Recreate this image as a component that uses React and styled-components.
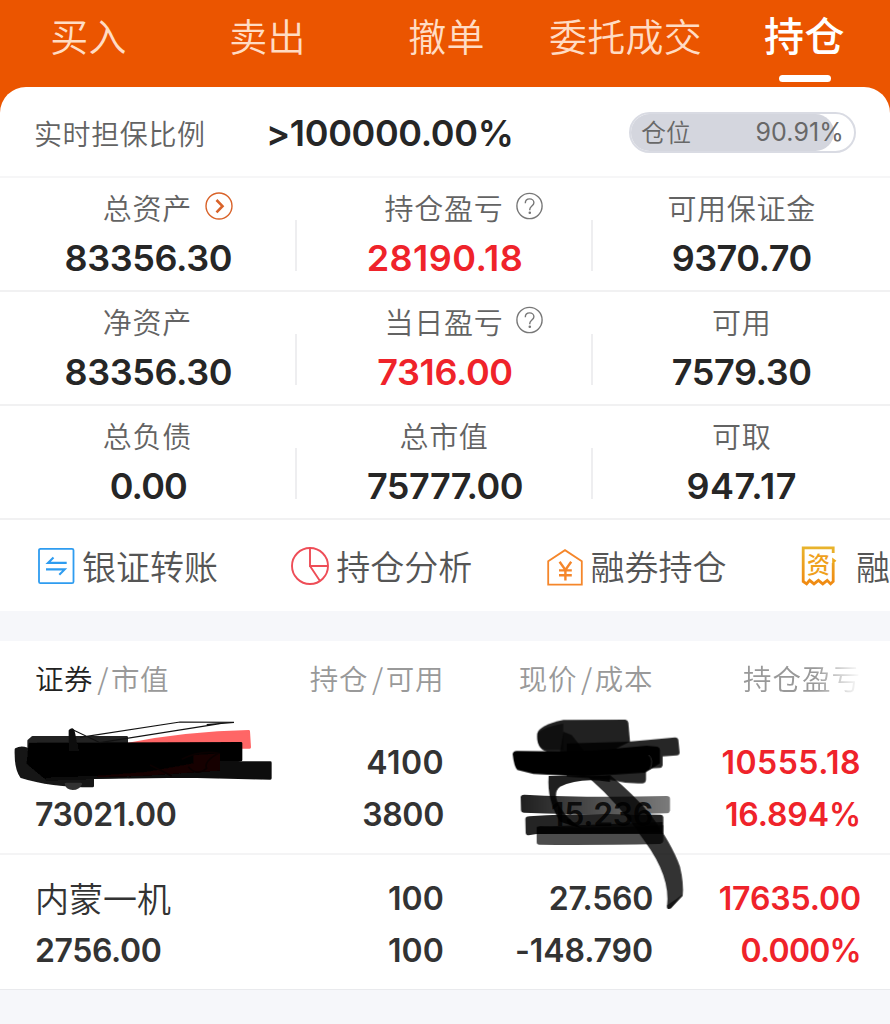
import React from "react";
import styled, { createGlobalStyle } from "styled-components";

const cjk = `"Noto Sans CJK SC", "Noto Sans", sans-serif`;
const num = `Inter, "Noto Sans CJK SC", sans-serif`;

const GlobalStyle = createGlobalStyle`
  * {
    box-sizing: border-box;
  }
  body {
    margin: 0;
    background: #f6f7fa;
    font-family: ${cjk};
    font-feature-settings: "calt" 0;
    overflow: hidden;
  }
`;

const Page = styled.div`
  position: relative;
  width: 890px;
  height: 1024px;
  overflow: hidden;
  background: #f6f7fa;
`;

const TopBar = styled.div`
  height: 120px;
  margin-bottom: -33px;
  background: #eb5500;
`;

const Tabs = styled.nav`
  display: flex;
  margin-left: -1px;
`;

const Tab = styled.div`
  flex: 0 0 179px;
  height: 87px;
  display: flex;
  flex-direction: column;
  align-items: center;
  font-size: ${p => (p.$active ? 40 : 38)}px;
  font-weight: ${p => (p.$active ? 500 : 350)};
  line-height: 69px;
  letter-spacing: ${p => (p.$active ? 0.5 : 0.3)}px;
  white-space: nowrap;
  color: ${p => (p.$active ? "#fff" : "#ffdcc4")};
`;

const Underline = styled.div`
  width: 52px;
  height: 7px;
  margin-top: 6px;
  border-radius: 4px;
  background: #fff;
`;

const Card = styled.section`
  background: #fff;
  border-radius: 26px 26px 0 0;
  overflow: hidden;
`;

const RatioRow = styled.div`
  display: flex;
  align-items: center;
  height: 91px;
  padding: 2px 34px 0 35px;
  border-bottom: 2px solid #f6f6f7;
`;

const RatioLabel = styled.div`
  width: 232px;
  font-size: 28px;
  font-weight: 350;
  letter-spacing: 0.6px;
  margin-left: -1px;
  color: #636363;
`;

const RatioValue = styled.div`
  flex: 1;
  font-family: ${num};
  font-size: 36px;
  font-weight: 600;
  letter-spacing: -0.35px;
  color: #262626;
`;

const Pill = styled.div`
  position: relative;
  width: 227px;
  height: 41px;
  border: 2px solid #d9dbe3;
  border-radius: 21px;
  overflow: hidden;
`;

const PillFill = styled.div`
  height: 100%;
  border-radius: 0 20px 20px 0;
  background: #d4d6de;
`;

const PillText = styled.div`
  position: absolute;
  inset: 0;
  display: flex;
  align-items: center;
  justify-content: space-between;
  padding: 0 10px;
  font-size: 25px;
  font-weight: 350;
  line-height: 37px;
  color: #686868;

  span:first-child {
    margin-top: -3px;
  }
  span:last-child {
    font-family: ${num};
    font-weight: 400;
    letter-spacing: 0.1px;
  }
`;

const StatRow = styled.div`
  display: grid;
  grid-template-columns: repeat(3, 1fr);
  height: 114px;
  border-bottom: 2px solid #f1f1f2;
`;

const Stat = styled.div`
  display: flex;
  flex-direction: column;
  align-items: center;
  padding-top: 9px;
  background: ${p =>
    p.$last
      ? "none"
      : "linear-gradient(#eeeef0, #eeeef0) right 42px / 2px 51px no-repeat"};
`;

const StatLabel = styled.div`
  display: flex;
  align-items: center;
  height: 40px;
  margin: 0 ${p => (p.$last ? 0 : 2)}px 11px 0;
  font-size: 29px;
  font-weight: 350;
  letter-spacing: 0.7px;
  color: #636363;

  svg {
    width: 28px;
    height: 28px;
    margin: -2px -41px 0 13px;
  }
`;

const StatValue = styled.div`
  height: 40px;
  line-height: 40px;
  font-family: ${num};
  font-size: 36px;
  font-weight: 600;
  letter-spacing: ${p => p.$track || -0.4}px;
  color: ${p => (p.$up ? "#ef232a" : "#262626")};
`;

const Tools = styled.div`
  display: flex;
  height: 91px;
  padding-left: 37px;
  background: #fff;
  overflow: hidden;
`;

const Tool = styled.div`
  flex: 0 0 254.3px;
  display: flex;
  align-items: center;
  gap: ${p => p.$gap || 7}px;
  font-size: 34px;
  font-weight: 350;
  white-space: nowrap;
  color: #555;

  svg {
    flex: none;
    width: 38px;
    height: 40px;
  }
`;

const ToolText = styled.span`
  margin-top: -1px;
`;

const Holdings = styled.section`
  margin-top: 30px;
  background: #fff;
  border-bottom: 1px solid #e9eaed;
`;

const HoldingGrid = styled.div`
  display: grid;
  grid-template-columns: 1fr 209px 209px 208px;
  padding: 0 29px 0 35px;
  text-align: right;

  > :first-child {
    text-align: left;
  }
`;

const HeadRow = styled(HoldingGrid)`
  height: 77px;
  line-height: 73px;
  font-size: 28.5px;
  font-weight: 350;
  letter-spacing: 0.6px;
  color: #999;
`;

const HeadCell = styled.div`
  b {
    font-weight: 350;
    color: #222;
  }
  i {
    font-style: normal;
    padding: 0 2px 0 4px;
  }
  ${p =>
    p.$fade &&
    `
    letter-spacing: 1px;
    -webkit-mask-image: linear-gradient(90deg, #000 calc(100% - 46px), transparent 100%);
  `}
`;

const HoldingRow = styled(HoldingGrid)`
  height: ${p => p.$height}px;
  padding-top: ${p => (p.$line ? 18 : 19)}px;
  border-top: ${p => (p.$line ? "2px solid #f4f4f5" : "0")};
`;

const Cell = styled.div`
  font-family: ${num};
  font-size: 32px;
  font-weight: 600;
  line-height: 52px;
  letter-spacing: ${p => p.$track || 0}px;
  color: ${p => (p.$up ? "#ef232a" : "#333")};
`;

const Figure = styled.div`
  height: 52px;
  letter-spacing: ${p => p.$track || 0}px;
`;

const Name = styled.div`
  height: 52px;
  font-family: ${cjk};
  font-size: 34px;
  font-weight: 350;
  line-height: 49px;
`;

// marker strokes are drawn above the table
const Ink = styled.svg`
  position: absolute;
  left: ${p => p.$x}px;
  top: 700px;
  width: ${p => p.$w}px;
  height: ${p => p.$h}px;
  pointer-events: none;
`;

const ArrowIcon = () => (
  <svg viewBox="0 0 28 28" fill="none" stroke="#d9632a">
    <circle cx="14" cy="14" r="13" strokeWidth="1.4" />
    <path d="M11.5 8l6 6.2-6 6.2" strokeWidth="2.6" />
  </svg>
);

const HelpIcon = () => (
  <svg viewBox="0 0 28 28" fill="none" stroke="#777" strokeWidth="1.4">
    <circle cx="13.5" cy="14" r="12.6" />
    <path d="M9.3 11.2c0-2.8 1.9-4.3 4.3-4.3s4.3 1.6 4.3 3.8c0 3.2-4.1 3.3-4.1 6.6v.9" />
    <circle cx="13.8" cy="20.7" r="0.6" fill="#777" />
  </svg>
);

const TransferIcon = () => (
  <svg viewBox="0 0 38 40" fill="none" stroke="#2e9cf0">
    <rect x="2" y="2.8" width="34.5" height="34.4" rx="1.5" strokeWidth="1.8" />
    <path d="M29.7 16.9H11L16.5 11.5M9 23.4h18.7L22.3 28.8" strokeWidth="2.1" />
  </svg>
);

const PieIcon = () => (
  <svg viewBox="0 0 38 40" fill="none" stroke="#ee4d57" strokeWidth="1.9">
    <circle cx="19" cy="20" r="18" />
    <path d="M19 2v18h18M19 20l10 15" />
  </svg>
);

const HouseIcon = () => (
  <svg viewBox="0 0 38 40" fill="none" stroke="#f5862a">
    <path d="M2.2 38.7V15.2L19 4.2l16.8 11v23.5z" strokeWidth="1.8" />
    <path d="M13.6 15.8l5.8 8.2 5.8-8.2M19.4 24v10.6M13 24.4h12.8M13 29.2h12.8" strokeWidth="2.4" />
  </svg>
);

const BillIcon = () => (
  <svg viewBox="0 0 38 40" fill="none">
    <defs>
      <linearGradient id="bill" x1="0" y1="0" x2="0" y2="1">
        <stop offset="0" stopColor="#e8b32c" />
        <stop offset="1" stopColor="#f08a12" />
      </linearGradient>
    </defs>
    <path
      d="M33.2 7V1.9H3.2v33.6l3.4 2.4 3-3.6 4.4 3.6 4.4-3.6 4.4 3.6 4.4-3.6 3.4 3.6 2.6-2.4V17"
      stroke="url(#bill)"
      strokeWidth="2.8"
    />
    <path d="M32.2 11.5l4.2 3.3-4.2 4z" fill="#eda81c" />
    <text
      x="18.5"
      y="26.5"
      textAnchor="middle"
      fontFamily="Noto Sans CJK SC"
      fontSize="23"
      fontWeight="500"
      fill="#efa01c"
    >
      资
    </text>
  </svg>
);

const tabs = ["买入", "卖出", "撤单", "委托成交", "持仓"];

const stats = [
  [
    { label: "总资产", value: "83356.30", icon: <ArrowIcon /> },
    { label: "持仓盈亏", value: "28190.18", icon: <HelpIcon />, up: true, track: 0.45 },
    { label: "可用保证金", value: "9370.70", track: -0.5 }
  ],
  [
    { label: "净资产", value: "83356.30" },
    { label: "当日盈亏", value: "7316.00", icon: <HelpIcon />, up: true },
    { label: "可用", value: "7579.30" }
  ],
  [
    { label: "总负债", value: "0.00", track: -0.9 },
    { label: "总市值", value: "75777.00", track: -0.5 },
    { label: "可取", value: "947.17", track: 0.5 }
  ]
];

const tools = [
  { label: "银证转账", icon: <TransferIcon /> },
  { label: "持仓分析", icon: <PieIcon /> },
  { label: "融券持仓", icon: <HouseIcon /> },
  { label: "融", icon: <BillIcon />, gap: 18 }
];

// each figure is [text, tracking]
const holdings = [
  {
    name: "",
    market: ["73021.00", -0.35],
    held: ["4100", 0.4],
    usable: ["3800", -0.3],
    price: ["", 0],
    cost: ["15.236", -0.3],
    profit: ["10555.18", 0.5],
    rate: ["16.894%", -0.1]
  },
  {
    name: "内蒙一机",
    market: ["2756.00", -0.4],
    held: ["100", 0.1],
    usable: ["100", 0.1],
    price: ["27.560", -0.3],
    cost: ["-148.790", -0.1],
    profit: ["17635.00", -0.1],
    rate: ["0.000%", -0.75]
  }
];

const NameInk = () => (
  <Ink $x={0} $w={300} $h={150} viewBox="0 0 900 450">
    <defs>
      <filter id="soft" x="-5%" y="-10%" width="110%" height="120%">
        <feGaussianBlur stdDeviation="2.2" />
      </filter>
    </defs>
    <g filter="url(#soft)" strokeLinejoin="round" strokeWidth="8">
      <path d="M385 132Q560 98 746 94L749 142L600 142L385 142Z" fill="#ff6666" stroke="#ff6666" />
      <path d="M98 112H380V150H86V122Z" fill="#242424" stroke="#242424" />
      <path d="M48 148Q62 140 80 146L140 200L278 236V258Q150 258 64 230Q46 205 48 148Z" fill="#151515" stroke="#151515" />
      <path d="M198 252H242Q236 266 218 266Q202 266 198 252Z" fill="#333" stroke="#333" />
      <path d="M90 132L723 130V180L640 200L440 228L140 236L84 190Z" fill="#000" stroke="#000" />
      <path d="M440 188L811 188V235L560 229L280 233L140 238Z" fill="#0d0d0d" stroke="#0d0d0d" />
      <path d="M290 208Q480 168 660 160L660 212L420 229L290 232Z" fill="#120202" />
      <path d="M130 132H580V190L440 215L280 228L140 232Z" fill="#000" />
      <path d="M210 92Q218 84 220 94L232 150L210 150Z" fill="#111" stroke="#111" />
    </g>
    <path d="M220 90L300 128L660 71M240 112L540 66L702 67L620 74" fill="none" stroke="#111" strokeWidth="3.5" />
    <path d="M545 178Q600 150 655 160Q610 185 620 205Q590 230 565 200M450 195Q490 215 515 228" fill="none" stroke="#0a0000" strokeWidth="5" />
  </Ink>
);

const PriceInk = () => (
  <Ink $x={500} $w={220} $h={220} viewBox="0 0 660 660">
    <defs>
      <linearGradient id="ink" x1="0" y1="0" x2="1" y2="0">
        <stop offset="0" stopColor="#000" stopOpacity=".88" />
        <stop offset="1" stopColor="#000" stopOpacity=".52" />
      </linearGradient>
    </defs>
    <g filter="url(#soft)">
      <path d="M112 100Q118 76 190 60L376 59Q384 60 385 68L390 125L330 155H140Q108 145 112 100Z" fill="#000" opacity=".87" />
      <path d="M112 100Q130 80 190 70V150H140Q108 145 112 100Z" fill="#000" opacity=".5" />
      <path d="M200 130L385 125Q460 118 525 112Q534 112 535 120L539 158Q538 166 530 166L488 169V196Q486 204 478 204L438 206V238Q438 248 428 250Q380 252 330 240L200 230Z" fill="#000" opacity=".85" />
      <path d="M38 162Q40 152 52 153L180 154L300 150L440 137L472 140Q480 142 480 150V190L435 218L250 230L100 222L52 210Q42 200 38 162Z" fill="#000" />
      <path d="M190 95L215 105L255 155H180Z" fill="#000" opacity=".7" />
      <path d="M62 290Q64 283 74 284Q260 294 500 288Q510 288 510 296V332Q508 340 500 340Q300 346 72 338Q64 338 63 330Z" fill="url(#ink)" />
      <path d="M76 356Q78 349 88 349Q240 338 482 344Q490 345 490 352V402H110L86 406Q78 406 77 398Z" fill="#000" opacity=".86" />
      <path d="M110 386Q112 378 120 378Q260 388 490 376V424Q488 432 480 432Q260 436 118 434Q110 434 110 426Z" fill="#000" opacity=".7" />
      <path d="M110 380L488 366V398L110 402Z" fill="#000" opacity=".75" />
      <path d="M146 228H330V246Q240 230 180 260Q155 280 182 325Q204 360 250 388L180 365Q140 300 146 228Z" fill="#000" opacity=".88" />
      <path d="M265 232L330 225Q400 282 450 342Q515 430 540 500Q552 550 548 588L513 625Q500 632 501 618Q512 530 435 425Q360 315 265 232Z" fill="#000" opacity=".8" />
      <path d="M548 582L513 625Q500 632 501 616L530 596Z" fill="#000" opacity=".6" />
    </g>
    <path d="M446 165Q462 180 450 208" fill="none" stroke="#2a2a2a" strokeWidth="3" />
  </Ink>
);

const App = () => {
  return (
    <Page>
      <GlobalStyle />
      <TopBar>
        <Tabs>
          {tabs.map(t => (
            <Tab key={t} $active={t === "持仓"}>
              {t}
              {t === "持仓" && <Underline />}
            </Tab>
          ))}
        </Tabs>
      </TopBar>

      <Card>
        <RatioRow>
          <RatioLabel>实时担保比例</RatioLabel>
          <RatioValue>&gt;100000.00%</RatioValue>
          <Pill>
            <PillFill style={{ width: "90.91%" }} />
            <PillText>
              <span>仓位</span>
              <span>90.91%</span>
            </PillText>
          </Pill>
        </RatioRow>
        {stats.map((row, i) => (
          <StatRow key={i}>
            {row.map((s, j) => (
              <Stat key={s.label} $last={j === 2}>
                <StatLabel $last={j === 2}>
                  {s.label}
                  {s.icon}
                </StatLabel>
                <StatValue $up={s.up} $track={s.track}>
                  {s.value}
                </StatValue>
              </Stat>
            ))}
          </StatRow>
        ))}
        <Tools>
          {tools.map(t => (
            <Tool key={t.label} $gap={t.gap}>
              {t.icon}
              <ToolText>{t.label}</ToolText>
            </Tool>
          ))}
        </Tools>
      </Card>

      <Holdings>
        <HeadRow>
          <HeadCell>
            <b>证券</b>
            <i>/</i>市值
          </HeadCell>
          <HeadCell>
            持仓<i>/</i>可用
          </HeadCell>
          <HeadCell>
            现价<i>/</i>成本
          </HeadCell>
          <HeadCell $fade>持仓盈亏</HeadCell>
        </HeadRow>
        {holdings.map((h, i) => (
          <HoldingRow key={h.market[0]} $height={i ? 136 : 135} $line={i > 0}>
            <Cell>
              <Name>{h.name}</Name>
              <Figure $track={h.market[1]}>{h.market[0]}</Figure>
            </Cell>
            <Cell>
              <Figure $track={h.held[1]}>{h.held[0]}</Figure>
              <Figure $track={h.usable[1]}>{h.usable[0]}</Figure>
            </Cell>
            <Cell>
              <Figure $track={h.price[1]}>{h.price[0]}</Figure>
              <Figure $track={h.cost[1]}>{h.cost[0]}</Figure>
            </Cell>
            <Cell $up>
              <Figure $track={h.profit[1]}>{h.profit[0]}</Figure>
              <Figure $track={h.rate[1]}>{h.rate[0]}</Figure>
            </Cell>
          </HoldingRow>
        ))}
      </Holdings>

      <NameInk />
      <PriceInk />
    </Page>
  );
};

export default App;
